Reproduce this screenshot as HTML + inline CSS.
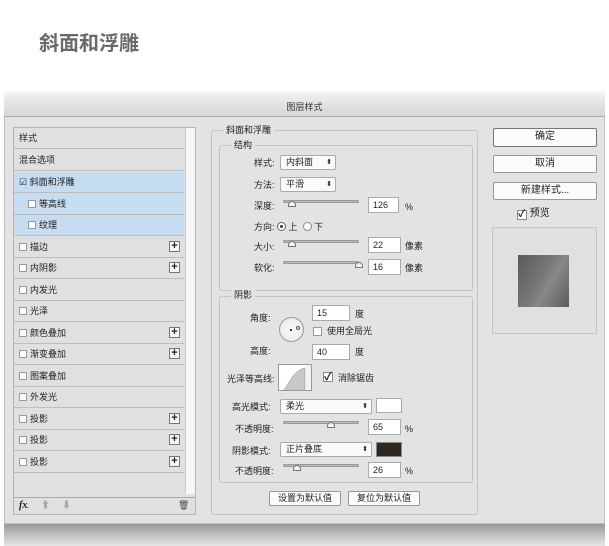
<!DOCTYPE html>
<html><head><meta charset="utf-8"><style>
*{margin:0;padding:0;box-sizing:border-box}
body{width:609px;height:546px;background:#fff;position:relative;overflow:hidden;font-family:"Liberation Sans","Noto Sans CJK SC",sans-serif;font-size:9px;color:#222}
.a{position:absolute}
.t{position:absolute;white-space:nowrap;font-size:9px;line-height:11px}
.row{position:absolute;left:14px;width:170px;height:22px;border-bottom:1px solid #bdbdbd;font-size:9px;line-height:23px;padding-left:5px}
.cb{display:inline-block;width:8px;height:8px;border:1px solid #999;background:#fff;vertical-align:-1px;margin-right:3px}
.plus{position:absolute;right:4px;top:5px;width:11px;height:11px;border:1px solid #777;background:#f6f6f6;font-size:11px;line-height:9px;text-align:center;font-weight:bold}
.inp{position:absolute;background:#fff;border:1px solid #aaa;font-size:9px;line-height:14px;padding-left:4px}
.sel{position:absolute;background:#fafafa;border:1px solid #aaa;font-size:9px;line-height:13px;padding-left:5px;border-radius:2px}
.sel:after{content:"⬍";position:absolute;right:3px;top:0;font-size:7px}
.sl{position:absolute;height:3px;background:#bbb;border:1px solid #999;border-radius:2px}
.th{position:absolute;width:8px;height:6px;border:1px solid #777;background:#f4f4f4;border-radius:4px 4px 0 0}
.btn{position:absolute;background:#fbfbfb;border:1px solid #999;border-radius:2px;text-align:center;font-size:10px;line-height:16px}
.grp{position:absolute;border:1px solid #c4c4c4;border-radius:3px}
.lbl{position:absolute;background:#e3e3e3;padding:0 3px;font-size:9px;line-height:10px}
</style></head><body>
<div class="t" style="left:39px;top:31px;font-size:20px;line-height:26px;font-weight:bold;color:#6a6a6a">斜面和浮雕</div>
<div class="a" style="left:4px;top:90px;width:601px;height:8px;background:linear-gradient(#fff,#e6e6e6)"></div>
<div class="a" style="left:4px;top:524px;width:601px;height:22px;background:linear-gradient(#9a9a9a,#c8c8c8 60%,#e6e6e6)"></div>
<div class="a" style="left:4px;top:97px;width:601px;height:427px;background:#e3e3e3;border:1px solid #c0c0c0"></div>
<div class="a" style="left:4px;top:97px;width:601px;height:20px;background:linear-gradient(#ececec,#d6d6d6);border-bottom:1px solid #aaa;text-align:center;font-size:9px;line-height:20px;color:#333">图层样式</div>
<!-- left list -->
<div class="a" style="left:13px;top:127px;width:183px;height:388px;border:1px solid #b5b5b5;background:#e0e0e0"></div>
<div class="a" style="left:185px;top:128px;width:10px;height:366px;background:#f6f6f6;border-left:1px solid #ccc"></div>
<div class="a" style="left:14px;top:172px;width:170px;height:64px;background:#c6dcf0"></div>
<div class="row" style="top:127px">样式</div>
<div class="row" style="top:149px">混合选项</div>
<div class="row" style="top:171px">☑ 斜面和浮雕</div>
<div class="row" style="top:193px;padding-left:14px"><span class="cb"></span>等高线</div>
<div class="row" style="top:214px;padding-left:14px"><span class="cb"></span>纹理</div>
<div class="row" style="top:236px"><span class="cb"></span>描边<span class="plus">+</span></div>
<div class="row" style="top:257px"><span class="cb"></span>内阴影<span class="plus">+</span></div>
<div class="row" style="top:279px"><span class="cb"></span>内发光</div>
<div class="row" style="top:300px"><span class="cb"></span>光泽</div>
<div class="row" style="top:322px"><span class="cb"></span>颜色叠加<span class="plus">+</span></div>
<div class="row" style="top:343px"><span class="cb"></span>渐变叠加<span class="plus">+</span></div>
<div class="row" style="top:365px"><span class="cb"></span>图案叠加</div>
<div class="row" style="top:386px"><span class="cb"></span>外发光</div>
<div class="row" style="top:408px"><span class="cb"></span>投影<span class="plus">+</span></div>
<div class="row" style="top:429px"><span class="cb"></span>投影<span class="plus">+</span></div>
<div class="row" style="top:451px"><span class="cb"></span>投影<span class="plus">+</span></div>
<div class="a" style="left:14px;top:497px;width:181px;height:1px;background:#aaa"></div>
<div class="t" style="left:19px;top:500px;font-family:'Liberation Serif',serif;font-style:italic;font-weight:bold;font-size:10px">fx<span style="font-size:6px">.</span></div>
<div class="t" style="left:41px;top:500px;color:#aaa">⬆</div>
<div class="t" style="left:62px;top:500px;color:#aaa">⬇</div>
<div class="t" style="left:178px;top:500px;color:#444">🗑</div>
<!-- middle -->
<div class="grp" style="left:211px;top:130px;width:267px;height:385px"></div>
<div class="lbl" style="left:223px;top:125px">斜面和浮雕</div>
<div class="grp" style="left:219px;top:145px;width:254px;height:146px"></div>
<div class="lbl" style="left:231px;top:140px">结构</div>
<div class="t" style="left:254px;top:158px">样式:</div><div class="sel" style="left:280px;top:155px;width:56px;height:15px">内斜面</div>
<div class="t" style="left:254px;top:180px">方法:</div><div class="sel" style="left:280px;top:177px;width:56px;height:15px">平滑</div>
<div class="t" style="left:254px;top:201px">深度:</div><div class="sl" style="left:283px;top:200px;width:76px"></div><div class="th" style="left:288px;top:201px"></div>
<div class="inp" style="left:368px;top:197px;width:31px;height:16px">126</div><div class="t" style="left:405px;top:202px">%</div>
<div class="t" style="left:254px;top:222px">方向: <span style="display:inline-block;width:9px;height:9px;border:1px solid #666;border-radius:50%;background:radial-gradient(#333 25%,#fff 35%);vertical-align:-1px"></span> 上 &nbsp;<span style="display:inline-block;width:9px;height:9px;border:1px solid #888;border-radius:50%;background:#fff;vertical-align:-1px"></span> 下</div>
<div class="t" style="left:254px;top:242px">大小:</div><div class="sl" style="left:283px;top:240px;width:76px"></div><div class="th" style="left:288px;top:241px"></div>
<div class="inp" style="left:368px;top:237px;width:33px;height:16px">22</div><div class="t" style="left:405px;top:241px">像素</div>
<div class="t" style="left:254px;top:263px">软化:</div><div class="sl" style="left:283px;top:261px;width:76px"></div><div class="th" style="left:355px;top:262px"></div>
<div class="inp" style="left:368px;top:259px;width:33px;height:16px">16</div><div class="t" style="left:405px;top:263px">像素</div>
<div class="grp" style="left:219px;top:296px;width:254px;height:187px"></div>
<div class="lbl" style="left:231px;top:290px">阴影</div>
<div class="t" style="left:250px;top:313px">角度:</div>
<div class="inp" style="left:312px;top:305px;width:38px;height:16px">15</div><div class="t" style="left:355px;top:309px">度</div>
<div class="a" style="left:279px;top:317px;width:25px;height:25px;border:1px solid #999;border-radius:50%;background:radial-gradient(#fafafa,#e6e6e6)"></div>
<div class="a" style="left:290px;top:329px;width:2px;height:2px;background:#333"></div>
<div class="a" style="left:296px;top:326px;width:4px;height:4px;border:1px solid #555;border-radius:50%"></div>
<div class="a" style="left:313px;top:327px;width:9px;height:9px;border:1px solid #999;background:#fff"></div><div class="t" style="left:327px;top:326px">使用全局光</div>
<div class="t" style="left:250px;top:346px">高度:</div>
<div class="inp" style="left:312px;top:344px;width:38px;height:16px">40</div><div class="t" style="left:355px;top:347px">度</div>
<div class="t" style="left:227px;top:374px">光泽等高线:</div>
<div class="a" style="left:278px;top:364px;width:34px;height:27px;border:1px solid #999;background:#fff;overflow:hidden"><svg width="34" height="27"><path d="M3 26 C10 22 12 6 26 3 L26 27 L3 27Z" fill="#c8c8c8" stroke="#888" stroke-width=".5"/><rect x="27" y="0" width="7" height="27" fill="#f2f2f2"/></svg></div>
<div class="a" style="left:323px;top:372px;width:10px;height:10px;border:1px solid #888;background:#fff;font-size:11px;line-height:8px;font-weight:bold">✓</div><div class="t" style="left:338px;top:373px">消除锯齿</div>
<div class="t" style="left:232px;top:402px">高光模式:</div><div class="sel" style="left:280px;top:399px;width:92px;height:15px">柔光</div>
<div class="a" style="left:376px;top:398px;width:26px;height:15px;background:#fff;border:1px solid #aaa"></div>
<div class="t" style="left:235px;top:424px">不透明度:</div><div class="sl" style="left:283px;top:421px;width:76px"></div><div class="th" style="left:327px;top:422px"></div>
<div class="inp" style="left:368px;top:419px;width:33px;height:16px">65</div><div class="t" style="left:405px;top:424px">%</div>
<div class="t" style="left:232px;top:446px">阴影模式:</div><div class="sel" style="left:280px;top:442px;width:92px;height:15px">正片叠底</div>
<div class="a" style="left:376px;top:442px;width:26px;height:15px;background:#2e2820;border:1px solid #888"></div>
<div class="t" style="left:235px;top:466px">不透明度:</div><div class="sl" style="left:283px;top:464px;width:76px"></div><div class="th" style="left:293px;top:465px"></div>
<div class="inp" style="left:368px;top:462px;width:33px;height:16px">26</div><div class="t" style="left:405px;top:466px">%</div>
<div class="btn" style="left:269px;top:491px;width:72px;height:15px;font-size:9px;line-height:13px">设置为默认值</div>
<div class="btn" style="left:348px;top:491px;width:72px;height:15px;font-size:9px;line-height:13px">复位为默认值</div>
<!-- right -->
<div class="btn" style="left:493px;top:128px;width:104px;height:19px;border-color:#777">确定</div>
<div class="btn" style="left:493px;top:155px;width:104px;height:18px">取消</div>
<div class="btn" style="left:493px;top:182px;width:104px;height:18px">新建样式...</div>
<div class="t" style="left:517px;top:207px;font-size:10px;line-height:13px"><span style="display:inline-block;width:10px;height:10px;border:1px solid #888;background:#fff;font-size:10px;line-height:8px;font-weight:bold;vertical-align:-1px">✓</span> 预览</div>
<div class="a" style="left:492px;top:227px;width:105px;height:107px;border:1px solid #c4c4c4;background:#e0e0e0"></div>
<div class="a" style="left:518px;top:255px;width:51px;height:52px;background:linear-gradient(120deg,#5a5a5a,#777 45%,#888 60%,#5c5c5c)"></div>
</body></html>
